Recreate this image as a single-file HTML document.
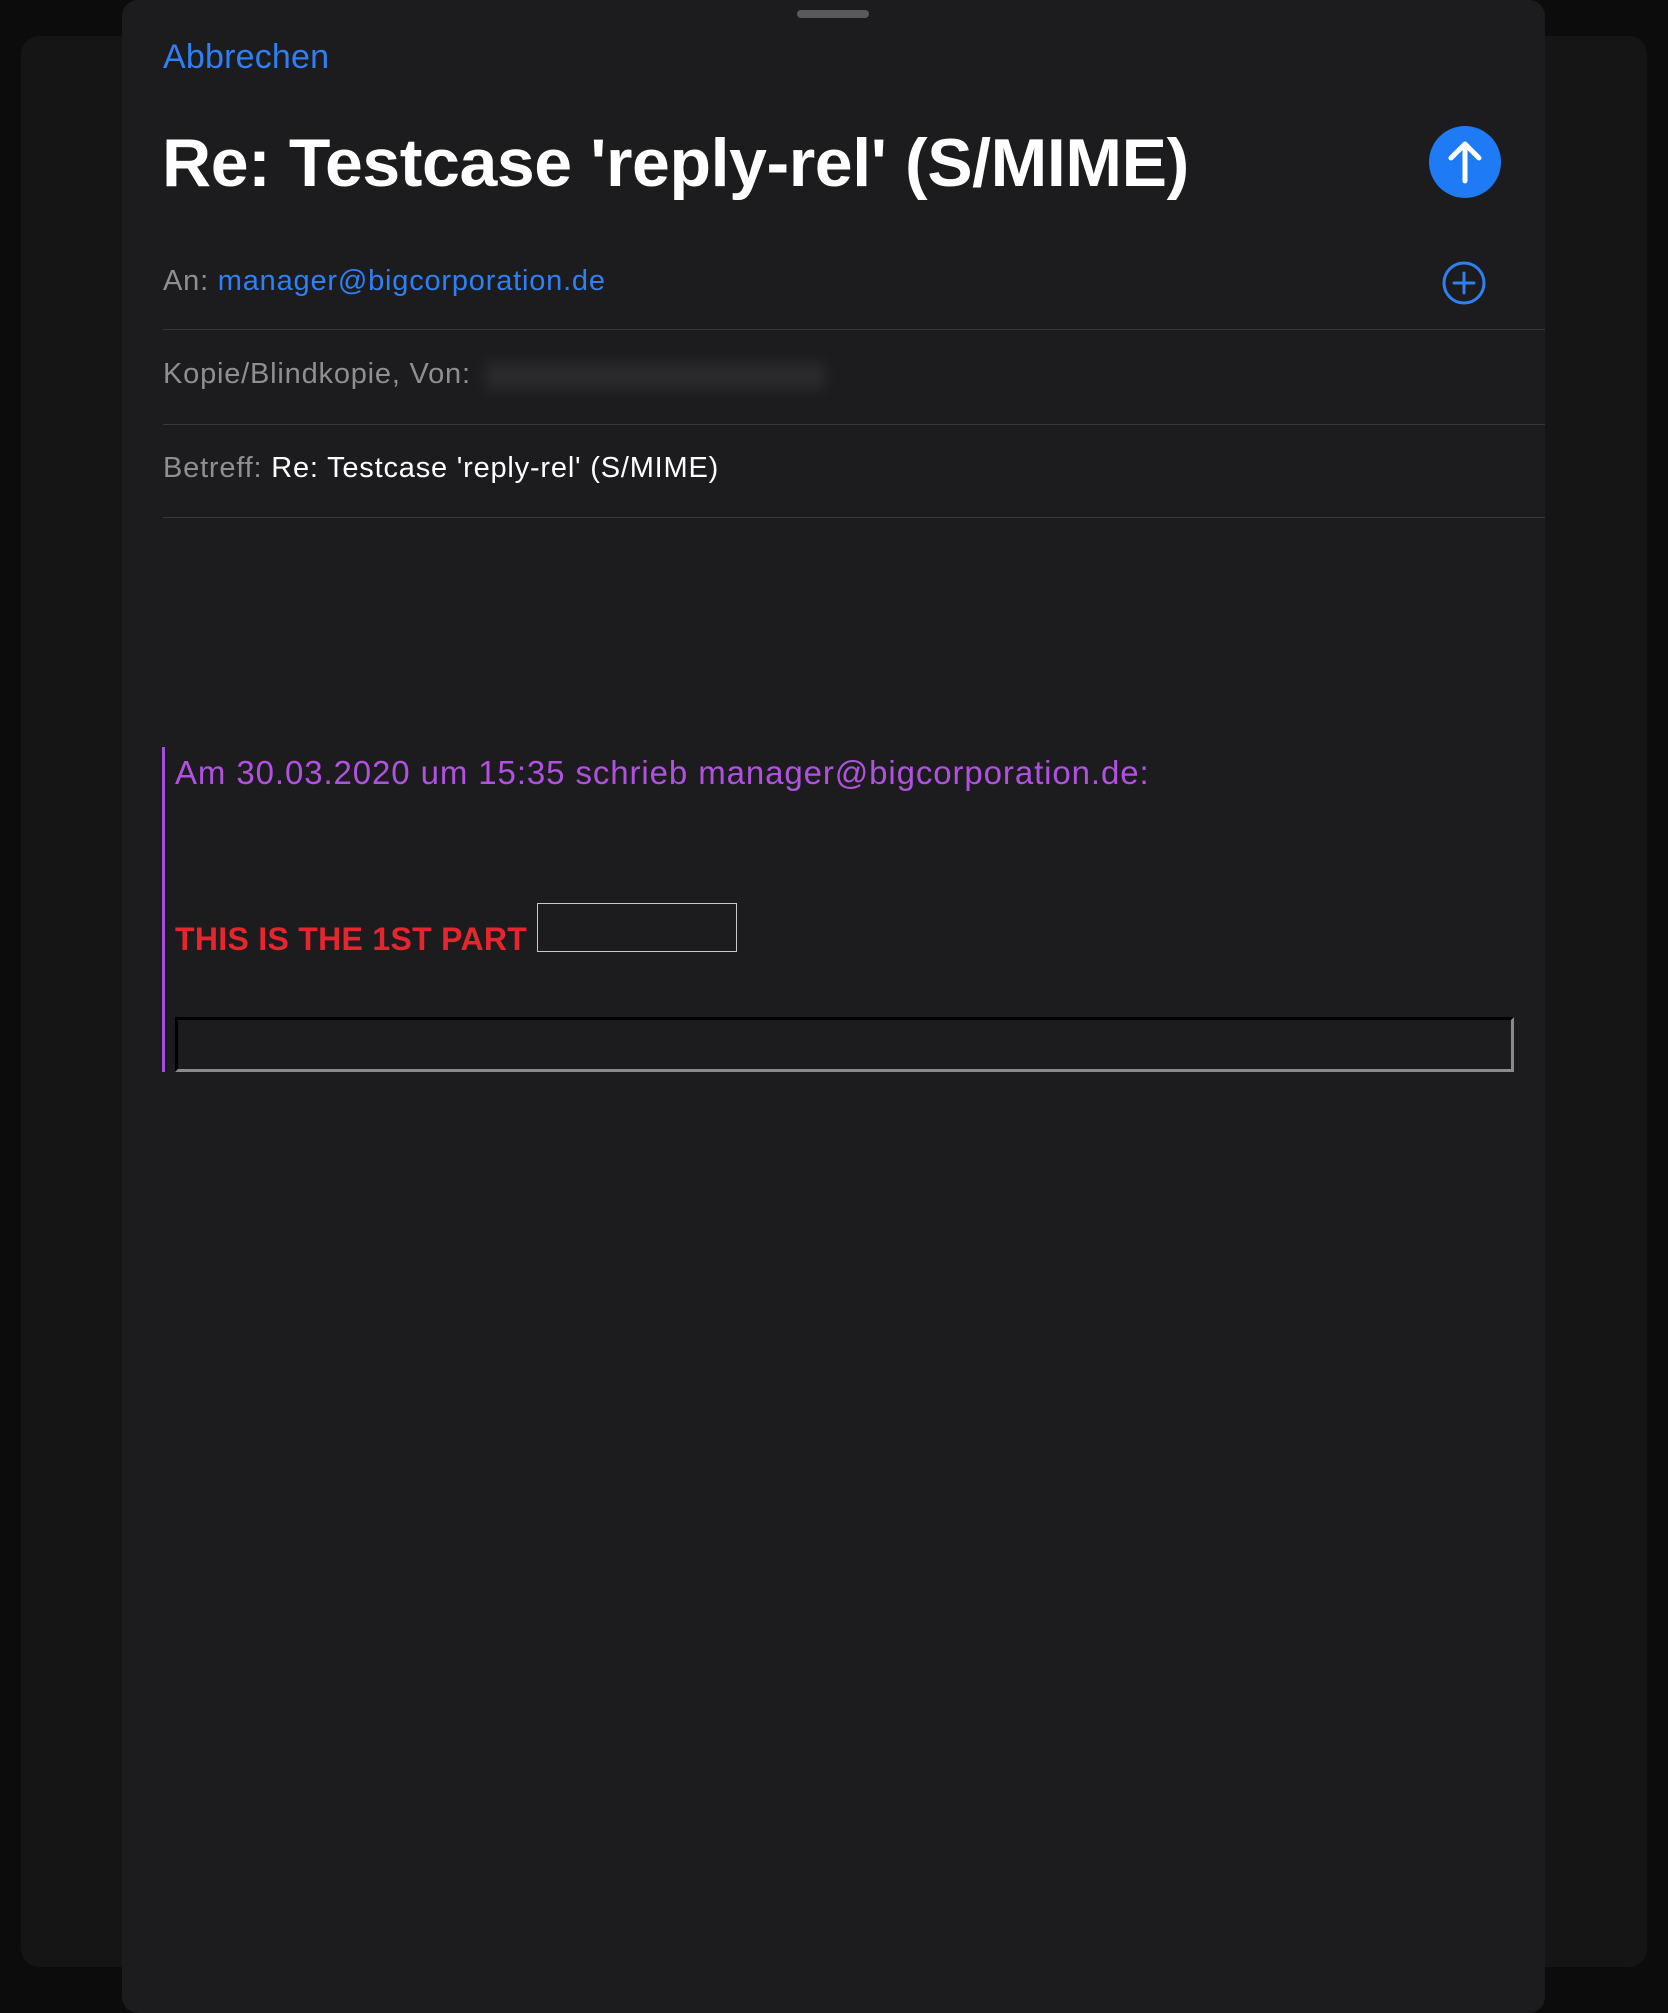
<!DOCTYPE html>
<html><head><meta charset="utf-8"><style>
body{margin:0;width:1668px;height:2013px;background:#0c0c0c;position:relative;overflow:hidden;font-family:"Liberation Sans",sans-serif}
.back{position:absolute;left:21px;top:36px;width:1626px;height:1931px;background:#141514;border-radius:18px}
.sheet{position:absolute;left:122px;top:0;width:1423px;height:2013px;background:#1c1c1e;border-radius:16px}
.a{position:absolute;white-space:nowrap}
.f{font-size:29px;letter-spacing:0.8px}
.div{position:absolute;left:163px;width:1382px;height:1px;background:#38383a}
</style></head><body>
<div class="back"></div>
<div class="sheet"></div>
<div class="a" style="left:797px;top:10px;width:72px;height:8px;border-radius:4px;background:#5a5a5e"></div>
<div class="a" style="left:163px;top:38px;font-size:34px;letter-spacing:0.2px;color:#2f7ff5">Abbrechen</div>
<div class="a" style="left:162px;top:124px;font-size:68px;font-weight:bold;color:#fff;letter-spacing:-0.4px">Re: Testcase 'reply-rel' (S/MIME)</div>
<svg class="a" style="left:1429px;top:126px" width="72" height="72" viewBox="0 0 72 72"><circle cx="36" cy="36" r="36" fill="#1f7bf5"/><path d="M36 55V18M22 32L36 18L50 32" stroke="#fff" stroke-width="5" fill="none" stroke-linecap="round" stroke-linejoin="round"/></svg>
<div class="a f" style="left:163px;top:265px;color:#8e8e93">An: <span style="color:#2f7ff5">manager@bigcorporation.de</span></div>
<svg class="a" style="left:1441px;top:260px" width="46" height="46" viewBox="0 0 46 46"><circle cx="23" cy="23" r="20" stroke="#2f7ff5" stroke-width="3" fill="none"/><path d="M23 13V33M13 23H33" stroke="#2f7ff5" stroke-width="3" stroke-linecap="round"/></svg>
<div class="div" style="top:329px"></div>
<div class="a f" style="left:163px;top:358px;color:#8e8e93">Kopie/Blindkopie, Von:</div>
<div class="a" style="left:485px;top:362px;width:340px;height:28px;background:#2a2a2c;filter:blur(6px)"></div>
<div class="div" style="top:424px"></div>
<div class="a f" style="left:163px;top:452px;color:#8e8e93">Betreff: <span style="color:#fff">Re: Testcase 'reply-rel' (S/MIME)</span></div>
<div class="div" style="top:517px"></div>
<div class="a" style="left:162px;top:747px;width:3px;height:325px;background:#a24fdd"></div>
<div class="a" style="left:175px;top:754px;font-size:33px;letter-spacing:0.9px;color:#b052df">Am 30.03.2020 um 15:35 schrieb manager@bigcorporation.de:</div>
<div class="a" style="left:175px;top:921px;font-size:32px;font-weight:bold;letter-spacing:0.3px;color:#e5262e">THIS IS THE 1ST PART</div>
<div class="a" style="left:537px;top:903px;width:198px;height:47px;border:1px solid #c8c8c8"></div>
<div class="a" style="left:175px;top:1017px;width:1333px;height:49px;border-style:solid;border-width:3px;border-color:#000 #8a8a8a #8a8a8a #000"></div>
</body></html>
